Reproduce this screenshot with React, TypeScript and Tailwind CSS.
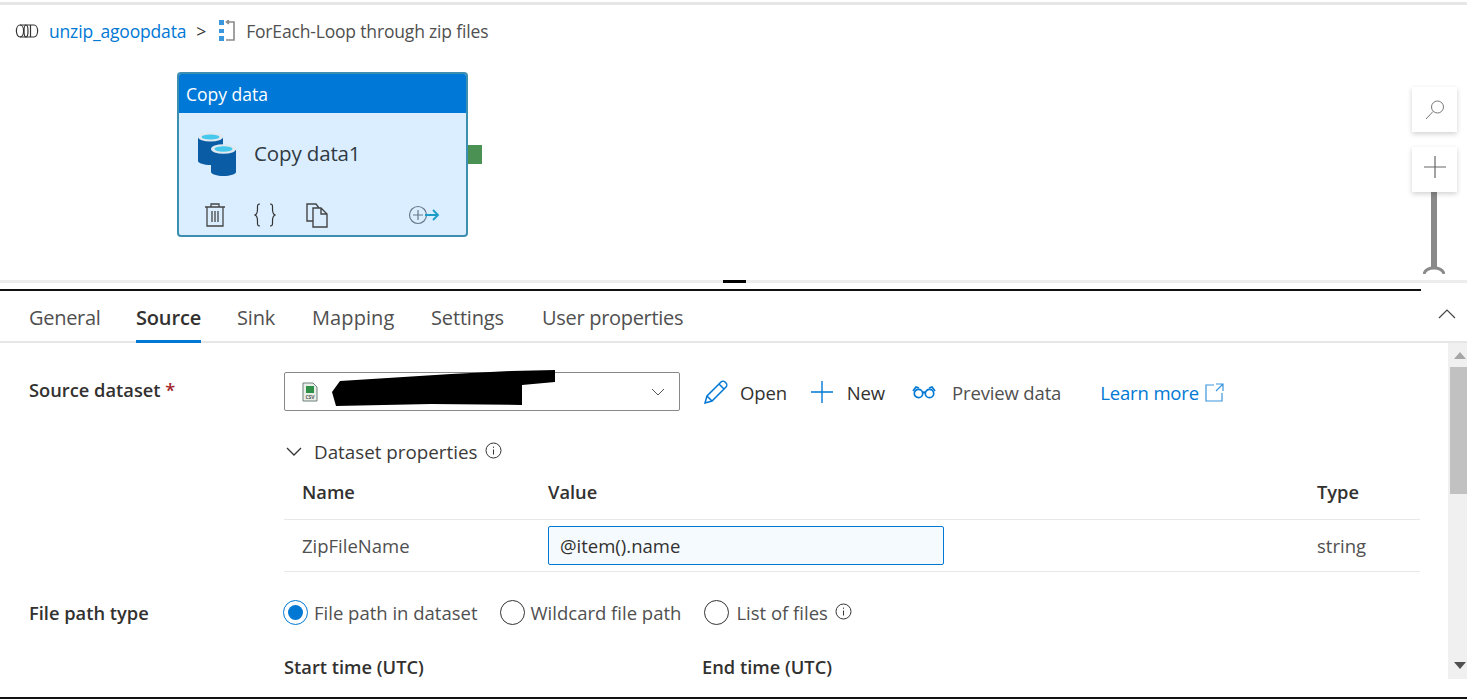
const font = { fontFamily: '"Open Sans", "Noto Sans", sans-serif' };

function Info({ className = "" }: { className?: string }) {
  return (
    <svg width="17" height="17" viewBox="0 0 17 17" fill="none" stroke="#333" className={className}>
      <circle cx="8.5" cy="8.5" r="7.5" strokeWidth="1" />
      <path d="M8.5 7.5v5M8.5 4.6v1.2" strokeWidth="1" />
    </svg>
  );
}

function Radio({ checked }: { checked?: boolean }) {
  return (
    <span className={`flex h-[25px] w-[25px] shrink-0 items-center justify-center rounded-full border ${checked ? "border-[#0078d4]" : "border-[#333]"}`}>
      {checked && <span className="h-[15px] w-[15px] rounded-full bg-[#0078d4]" />}
    </span>
  );
}

function Canvas() {
  return (
    <div className="relative mt-[2px] h-[278px] border-t-[3px] border-[#e6e6e6]">
      <div className="flex h-[52px] items-center pl-[15px] text-[17.5px] tracking-[-0.17px]">
        <svg width="24" height="16" viewBox="0 0 24 16" fill="none" stroke="#333" strokeWidth="1.2">
          <path d="M5 2h14M5 14h14" />
          <ellipse cx="5" cy="8" rx="3.6" ry="6" />
          <ellipse cx="11" cy="8" rx="2" ry="6" />
          <path d="M15.5 2v12" />
          <path d="M19 2c2 0 3.6 2.7 3.6 6S21 14 19 14" />
        </svg>
        <span className="ml-[10px] text-[#0078d4]">unzip_agoopdata</span>
        <span className="ml-[10px] text-[#333]">&gt;</span>
        <svg width="18" height="22" viewBox="0 0 18 22" className="ml-[12px]">
          <rect x="1" y="0" width="5" height="5" fill="#3a96dd" />
          <rect x="1" y="9" width="5" height="4" fill="#3a96dd" />
          <rect x="1" y="16" width="5" height="5" fill="#3a96dd" />
          <path d="M9 2h7v18H8M11 0L8.500 2l2.500 2" fill="none" stroke="#8a8a8a" strokeWidth="1.6" />
        </svg>
        <span className="ml-[10px] text-[#505050]">ForEach-Loop through zip files</span>
      </div>

      <div className="absolute left-[177px] top-[67px] h-[165px] w-[291px] overflow-hidden rounded-[4px] border-2 border-[#3c8fb0] bg-[#dbeeff]">
        <div className="flex h-[39px] items-center bg-[#0078d7] pl-[7px] pt-[1px] text-[17.5px] text-white">Copy data</div>
        <div className="flex h-[81px] items-center pl-[18px]">
          <svg width="40" height="44" viewBox="0 0 40 44">
            <path d="M1 5v24c0 2 6 4 12.500 4S26 31 26 29V5z" fill="#0a5ca5" />
            <ellipse cx="13.500" cy="5" rx="12.500" ry="4.500" fill="#dfe9ef" />
            <ellipse cx="13.500" cy="5" rx="9" ry="2.600" fill="#45c8ec" />
            <path d="M14 18v22c0 2 6 4 12.500 4S39 42 39 40V18z" fill="#0a5ca5" />
            <ellipse cx="26.500" cy="17" rx="12.500" ry="4.800" fill="#dfe9ef" />
            <ellipse cx="26.500" cy="17" rx="9" ry="2.700" fill="#45c8ec" />
          </svg>
          <span className="ml-[17px] text-[20.5px] text-[#2f3a42] tracking-[-0.13px]">Copy data1</span>
        </div>
        <div className="flex h-[41px] items-center pl-[25px]">
          <svg width="22" height="25" viewBox="0 0 22 25" fill="none" stroke="#444" strokeWidth="1.3">
            <path d="M1 5h20M7 5V2h8v3M3 5v19h16V5M8 9v11M11 9v11M14 9v11" />
          </svg>
          <svg width="22" height="24" viewBox="0 0 22 24" fill="none" stroke="#333" strokeWidth="1.2" className="ml-[28px]">
            <path d="M6 1C3 1 3.500 3 3.500 6S3.500 11 1 12c2.500 1 2.500 3 2.500 6S3 23 6 23" />
            <path d="M16 1c3 0 2.500 2 2.500 5s0 5 2.500 6c-2.500 1-2.500 3-2.500 6s.5 5-2.500 5" />
          </svg>
          <svg width="24" height="26" viewBox="0 0 24 26" fill="none" stroke="#444" strokeWidth="1.4" className="ml-[29px]">
            <path d="M8 19H2V2h9l3 4M8 6h8l6 6v13H8zM16 6v6h6" />
          </svg>
          <svg width="32" height="20" viewBox="0 0 32 20" fill="none" className="ml-[79px]">
            <circle cx="10" cy="10" r="8.500" stroke="#66788a" strokeWidth="1.2" />
            <path d="M5 10h10M10 5v10" stroke="#66788a" strokeWidth="1.2" />
            <path d="M17 10h13M25 5l5 5-5 5" stroke="#1b9cc7" strokeWidth="1.8" />
          </svg>
        </div>
      </div>
      <div className="absolute left-[468px] top-[140px] h-[19px] w-[14px] bg-[#4a9153]" />

      <div className="absolute left-[1412px] top-[82px] flex h-[45px] w-[45px] items-center justify-center bg-white shadow-[0_2px_5px_rgba(0,0,0,0.18)]">
        <svg width="20" height="20" viewBox="0 0 20 20" fill="none" stroke="#777" strokeWidth="1">
          <circle cx="12.500" cy="7" r="6" />
          <path d="M8 11.500L1 19" />
        </svg>
      </div>
      <div className="absolute left-[1412px] top-[142px] z-10 flex h-[45px] w-[45px] items-center justify-center bg-white shadow-[0_2px_5px_rgba(0,0,0,0.18)]">
        <svg width="24" height="24" viewBox="0 0 24 24" fill="none" stroke="#666" strokeWidth="1.2" className="mb-[5px]">
          <path d="M1 12h22M12 1v22" />
        </svg>
      </div>
      <div className="absolute left-[1431px] top-[187px] h-[75px] w-[6px] bg-[#8a8a8a]" />
      <svg width="22" height="8" viewBox="0 0 22 8" className="absolute left-[1423px] top-[261px]">
        <path d="M1 8C2 4 6 2 11 2s9 2 10 6" fill="none" stroke="#8a8a8a" strokeWidth="3" />
      </svg>
    </div>
  );
}

export default function App() {
  return (
    <div className="h-[699px] w-[1467px] overflow-hidden bg-white" style={font}>
      <Canvas />
      <div className="relative h-[9px] border-t-[3px] border-[#ededed]">
        <div className="absolute left-[723px] top-[-3px] h-[3px] w-[23px] bg-black" />
      </div>
      <div className="h-[2px] w-[1421px] bg-[#111]" />

      <div className="flex h-[52px] items-stretch justify-between border-b-2 border-[#e6e6e6] text-[20px] tracking-[-0.15px] text-[#505050]">
        <div className="flex pl-[29px] whitespace-nowrap">
          <div className="flex w-[71px] items-center pt-[4px] tracking-[-0.3px]">General</div>
          <div className="-mb-[2px] ml-[36px] flex w-[65px] items-center justify-center border-b-[3px] border-[#0078d4] pt-[5px] font-semibold text-[#323130]">Source</div>
          <div className="ml-[36px] flex w-[38px] items-center pt-[4px]">Sink</div>
          <div className="ml-[37px] flex w-[82px] items-center pt-[4px] tracking-[0.1px]">Mapping</div>
          <div className="ml-[37px] flex w-[74px] items-center pt-[4px]">Settings</div>
          <div className="ml-[37px] flex items-center pt-[4px] tracking-[-0.3px]">User properties</div>
        </div>
        <svg width="18" height="12" viewBox="0 0 18 12" fill="none" stroke="#444" strokeWidth="1.2" className="mr-[11px] mt-[17px]">
          <path d="M1 10l8-8 8 8" />
        </svg>
      </div>

      <div className="flex h-[354px]">
        <div className="w-[1448px] pt-[22px] text-[#323130]">
          <div className="flex h-[50px] items-start">
            <div className="w-[284px] pl-[29px] pt-[13px] text-[18.3px] font-semibold leading-[24px] text-[#323130]">
              Source dataset <span className="text-[#a4262c]">*</span>
            </div>
            <div className="relative mt-[7px] flex h-[39px] w-[396px] items-center justify-between rounded-[2px] border border-[#8a8886] pl-[17px] pr-[14px]">
              <svg width="16" height="20" viewBox="0 0 16 20">
                <path d="M1 1h10l4 4v14H1z" fill="#e8efe8" stroke="#6d7f78" />
                <rect x="4" y="4" width="8" height="7" fill="#2f8f46" />
                <text x="8" y="16.500" fontSize="5" fontWeight="700" textAnchor="middle" fill="#555">CSV</text>
              </svg>
              <svg width="14" height="8" viewBox="0 0 14 8" fill="none" stroke="#555" strokeWidth="1">
                <path d="M1 1l6 6 6-6" />
              </svg>
              <svg width="226" height="38" viewBox="0 0 226 38" className="absolute left-[46px] top-[-3px]">
                <path d="M9 11L120 4L180 1L224 0L224 12L191 15L191 35L100 34L5 36L1 22Z" fill="#000" />
              </svg>
            </div>
            <div className="ml-[24px] mt-[7px] flex h-[39px] items-center text-[18.5px] tracking-[-0.15px] text-[#323130]">
              <svg width="24" height="24" viewBox="0 0 24 24" fill="none" stroke="#0078d4" strokeWidth="1.5">
                <path d="M1 23l2-7L17 2c1-1 3-1 4 0l1 1c1 1 1 3 0 4L8 21zM3 16l5 5M15 4l5 5" />
              </svg>
              <span className="ml-[12px] pt-[2px]">Open</span>
              <svg width="24" height="24" viewBox="0 0 24 24" fill="none" stroke="#0078d4" strokeWidth="1.4" className="ml-[23px]">
                <path d="M1 12h22M12 1v22" />
              </svg>
              <span className="ml-[13px] pt-[2px]">New</span>
              <svg width="24" height="14" viewBox="0 0 24 14" fill="none" stroke="#0078d4" strokeWidth="1.7" className="ml-[27px]">
                <circle cx="6.500" cy="8.500" r="4.200" />
                <circle cx="17.500" cy="8.500" r="4.200" />
                <path d="M1 6L4 2l3 1M23 6l-3-4-3 1M10.500 8c1-1 2-1 3 0" />
              </svg>
              <span className="ml-[16px] pt-[2px] text-[#505050]">Preview data</span>
              <span className="ml-[39px] pt-[3px] text-[#0078d4]">Learn more</span>
              <svg width="19" height="19" viewBox="0 0 19 19" fill="none" stroke="#3a96dd" strokeWidth="1.2" className="ml-[6px] mt-[1px]">
                <path d="M9 2H1v16h16v-8M11 1h7v7M18 1l-7 7" />
              </svg>
            </div>
          </div>

          <div className="ml-[285px] mt-[25px] flex h-[24px] items-center">
            <svg width="18" height="10" viewBox="0 0 18 10" fill="none" stroke="#333" strokeWidth="1.3">
              <path d="M2 1l7 7 7-7" />
            </svg>
            <span className="ml-[11px] text-[18.8px] font-medium text-[#3b3a39]">Dataset properties</span>
            <Info className="ml-[8px] -mt-[3px]" />
          </div>

          <div className="ml-[284px] mt-[11px] w-[1136px]">
            <div className="flex h-[45px] items-center border-b border-[#e8e8e8] pb-[10px] text-[18.3px] font-semibold text-[#323130]">
              <span className="w-[264px] pl-[18px]">Name</span>
              <span className="w-[769px]">Value</span>
              <span>Type</span>
            </div>
            <div className="flex h-[52px] items-center border-b border-[#e8e8e8] text-[18.5px] text-[#505050]">
              <span className="w-[264px] pl-[18px]">ZipFileName</span>
              <div className="flex h-[39px] w-[396px] items-center rounded-[2px] border border-[#0078d4] bg-[#f5fafe] pl-[11px] text-[#323130]">@item().name</div>
              <span className="ml-[373px]">string</span>
            </div>
          </div>

          <div className="mt-[18px] flex h-[46px] items-start">
            <div className="w-[283px] pl-[29px] pt-[11px] text-[18.3px] font-semibold leading-[24px]">File path type</div>
            <div className="flex items-center pt-[9px] text-[18.5px] text-[#505050]">
              <Radio checked />
              <span className="ml-[6px]">File path in dataset</span>
              <span className="ml-[22px]"><Radio /></span>
              <span className="ml-[6px]">Wildcard file path</span>
              <span className="ml-[23px]"><Radio /></span>
              <span className="ml-[7px]">List of files</span>
              <Info className="ml-[7px] -mt-[3px]" />
            </div>
          </div>

          <div className="mt-[19px] flex text-[18.3px] font-semibold leading-[24px]">
            <span className="ml-[284px] w-[418px]">Start time (UTC)</span>
            <span>End time (UTC)</span>
          </div>
        </div>

        <div className="flex h-[336px] w-[19px] flex-col items-end bg-[#f0f0f0]">
          <svg width="12" height="7" viewBox="0 0 12 7" className="mt-[9px] mr-[1px]"><path d="M6 0l6 7H0z" fill="#a6a6a6" /></svg>
          <div className="mt-[8px] h-[127px] w-[17px] bg-[#c1c1c1]" />
          <svg width="12" height="7" viewBox="0 0 12 7" className="mb-[10px] mr-[1px] mt-auto"><path d="M0 0h12L6 7z" fill="#505050" /></svg>
        </div>
      </div>
      <div className="h-[2px] bg-[#111]" />
    </div>
  );
}
